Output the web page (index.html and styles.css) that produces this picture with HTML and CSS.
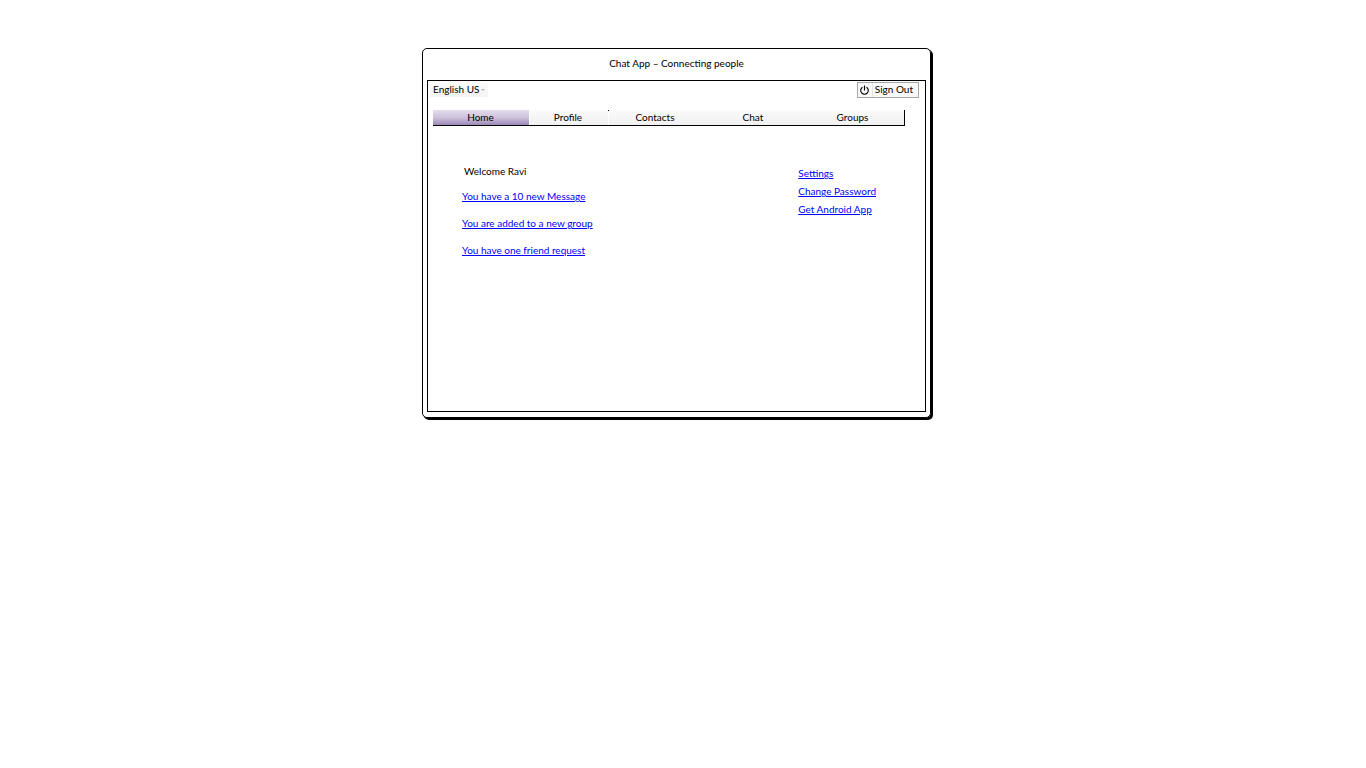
FILE: index.html
```html
<!DOCTYPE html>
<html lang="en">
<head>
<meta charset="utf-8">
<title>Chat App</title>
<link rel="stylesheet" href="styles.css">
</head>
<body>
<div class="page">
  <div class="window">
    <h1 class="title">Chat App – Connecting people</h1>
    <div class="screen">
      <header class="toolbar">
        <div class="language">
          <select class="language-select" aria-label="Language">
            <option>English US</option>
          </select>
          <svg class="language-arrow" width="4" height="2" viewBox="0 0 4 2" aria-hidden="true"><path d="M0 0h4L2 2z" fill="#b4b4b4"/></svg>
        </div>
        <button class="sign-out" type="button">
          <span class="power">
            <svg width="11" height="11" viewBox="0 0 11 11" fill="none" stroke="#000" stroke-width="1.1" aria-hidden="true"><path d="M3.5 2.2A3.8 3.8 0 1 0 7.5 2.2M5.5 .5V5.5"/></svg>
          </span>
          <span class="sign-out-label">Sign Out</span>
        </button>
      </header>
      <nav class="tabs">
        <a class="tab tab-active" href="#home">Home</a>
        <a class="tab tab-profile" href="#profile">Profile</a>
        <a class="tab tab-contacts" href="#contacts">Contacts</a>
        <a class="tab" href="#chat">Chat</a>
        <a class="tab tab-groups" href="#groups">Groups</a>
      </nav>
      <main class="content">
        <section class="updates">
          <p class="welcome">Welcome Ravi</p>
          <a class="link" href="#messages">You have a 10 new Message</a>
          <a class="link" href="#group">You are added to a new group</a>
          <a class="link" href="#requests">You have one friend request</a>
        </section>
        <aside class="options">
          <a class="link" href="#settings">Settings</a>
          <a class="link" href="#password">Change Password</a>
          <a class="link" href="#android">Get Android App</a>
        </aside>
      </main>
    </div>
  </div>
</div>
</body>
</html>
```
FILE: styles.css
```css
* {
  box-sizing: border-box;
}

body {
  margin: 0;
  background: #fff;
  color: #000;
  font: 10px/12px Lato, "Open Sans", sans-serif;
}

.page {
  display: flex;
  justify-content: center;
  padding: 48px 13px 48px 0;
}

.window {
  width: 100%;
  max-width: 509px;
  padding: 0 4px 5px;
  border: 1px solid #000;
  border-radius: 5px;
  box-shadow: 1px 1px 0 #000, 2px 2px 0 #000;
}

.title {
  margin: 0;
  padding: 8px 0 11px;
  font-size: 10px;
  font-weight: 400;
  line-height: 12px;
  text-align: center;
}

.screen {
  min-height: 332px;
  border: 1px solid #000;
}

.toolbar {
  display: flex;
  justify-content: space-between;
  padding: 1px 6px 0 2px;
}

.language {
  display: flex;
  align-items: center;
  gap: 1px;
  height: 14px;
  margin-top: 1px;
  padding: 0 3px;
  background: linear-gradient(#fafafa, #f3f3f3);
}

.language-select {
  appearance: none;
  height: 14px;
  padding: 0 0 2px;
  border: 0;
  background: none;
  color: inherit;
  font: inherit;
}

.sign-out {
  display: flex;
  height: 16px;
  padding: 0;
  border: 1px solid #a6a6a6;
  background: #f9f9f9;
  color: inherit;
  font: inherit;
}

.power {
  display: flex;
  align-items: center;
  justify-content: center;
  width: 15px;
  height: 14px;
  border-right: 1px solid #e4e4e4;
}

.sign-out-label {
  padding: 0 5px 0 2px;
  line-height: 12px;
}

.tabs {
  display: grid;
  grid-template-columns: 97fr 79fr 92fr 104fr 99fr;
  margin: 12px 20px 0 5px;
  border-right: 1px solid #000;
  border-bottom: 1px solid #000;
}

.tab {
  height: 15px;
  background: linear-gradient(#fafafa, #f1f1f1);
  color: inherit;
  line-height: 15px;
  text-align: center;
  text-decoration: none;
}

.tab-active {
  padding-right: 1px;
  border-right: 1px solid #fff;
  background: linear-gradient(#e2dcec, #cdc2dc 50%, #9c89b8);
}

.tab-profile {
  padding-right: 2px;
  border-right: 1px solid;
  border-image: linear-gradient(#000 1px, #fff 1px) 0 1 / 0 1px 0 0;
}

.tab-groups {
  padding-right: 4px;
}

.content {
  display: flex;
  justify-content: space-between;
  padding: 39px 49px 0 34px;
}

.updates,
.options {
  display: flex;
  flex-direction: column;
  align-items: flex-start;
}

.updates {
  gap: 15px;
}

.welcome {
  margin: 0 2px -2px;
}

.options {
  gap: 6px;
  padding-top: 2px;
}

.link {
  color: #00f;
  text-decoration: underline;
}
```
